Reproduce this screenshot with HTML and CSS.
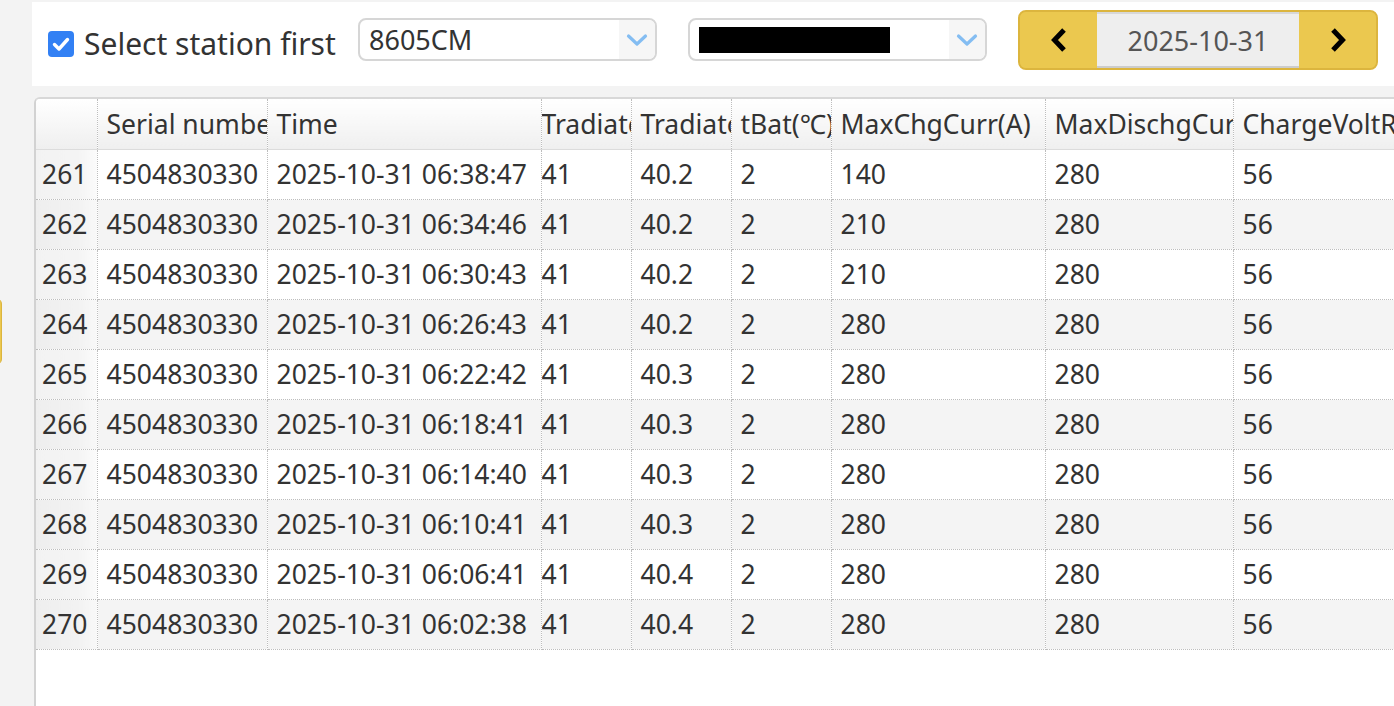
FILE: index.html
```html
<!DOCTYPE html>
<html>
<head>
<meta charset="utf-8">
<link rel="stylesheet" href="styles.css">
</head>
<body>
<div class="page">
  <div class="toolbar">
    <label class="check">
      <span class="box"><svg viewBox="0 0 26 26" width="26" height="26"><path d="M6.5 13.5 L11 18 L19.5 8.5" fill="none" stroke="#fff" stroke-width="3.4" stroke-linecap="round" stroke-linejoin="round"/></svg></span>
      <span class="check-text">Select station first</span>
    </label>
    <div class="select">
      <span class="select-value">8605CM</span>
      <span class="select-arrow"><svg viewBox="0 0 22 14" width="22" height="14"><path d="M2.5 3 L11 11 L19.5 3" fill="none" stroke="#84bdf2" stroke-width="3.2" stroke-linecap="round" stroke-linejoin="round"/></svg></span>
    </div>
    <div class="select select-two">
      <span class="select-value"><span class="redact"></span></span>
      <span class="select-arrow"><svg viewBox="0 0 22 14" width="22" height="14"><path d="M2.5 3 L11 11 L19.5 3" fill="none" stroke="#84bdf2" stroke-width="3.2" stroke-linecap="round" stroke-linejoin="round"/></svg></span>
    </div>
    <div class="datenav">
      <button class="nav-btn nav-prev"><svg viewBox="0 0 22 26" width="22" height="26"><path d="M16 3 L6.5 13 L16 23" fill="none" stroke="#000" stroke-width="5" stroke-linejoin="miter"/></svg></button>
      <span class="nav-date">2025-10-31</span>
      <button class="nav-btn nav-next"><svg viewBox="0 0 22 26" width="22" height="26"><path d="M6 3 L15.5 13 L6 23" fill="none" stroke="#000" stroke-width="5" stroke-linejoin="miter"/></svg></button>
    </div>
  </div>
  <div class="side-tab"></div>
  <div class="grid-wrap">
    <table class="grid">
      <colgroup>
        <col class="c-num"><col class="c-sn"><col class="c-time"><col class="c-t1"><col class="c-t2"><col class="c-tb"><col class="c-chg"><col class="c-dis"><col class="c-cv">
      </colgroup>
      <thead>
        <tr>
          <th class="num"></th><th>Serial number</th><th>Time</th><th class="tight">Tradiator1(℃)</th><th>Tradiator2(℃)</th><th>tBat(℃)</th><th>MaxChgCurr(A)</th><th>MaxDischgCurr(A)</th><th>ChargeVoltRef(V)</th>
        </tr>
      </thead>
      <tbody>
        <tr><td class="num">261</td><td>4504830330</td><td>2025-10-31 06:38:47</td><td class="tight">41</td><td>40.2</td><td>2</td><td>140</td><td>280</td><td>56</td></tr>
        <tr><td class="num">262</td><td>4504830330</td><td>2025-10-31 06:34:46</td><td class="tight">41</td><td>40.2</td><td>2</td><td>210</td><td>280</td><td>56</td></tr>
        <tr><td class="num">263</td><td>4504830330</td><td>2025-10-31 06:30:43</td><td class="tight">41</td><td>40.2</td><td>2</td><td>210</td><td>280</td><td>56</td></tr>
        <tr><td class="num">264</td><td>4504830330</td><td>2025-10-31 06:26:43</td><td class="tight">41</td><td>40.2</td><td>2</td><td>280</td><td>280</td><td>56</td></tr>
        <tr><td class="num">265</td><td>4504830330</td><td>2025-10-31 06:22:42</td><td class="tight">41</td><td>40.3</td><td>2</td><td>280</td><td>280</td><td>56</td></tr>
        <tr><td class="num">266</td><td>4504830330</td><td>2025-10-31 06:18:41</td><td class="tight">41</td><td>40.3</td><td>2</td><td>280</td><td>280</td><td>56</td></tr>
        <tr><td class="num">267</td><td>4504830330</td><td>2025-10-31 06:14:40</td><td class="tight">41</td><td>40.3</td><td>2</td><td>280</td><td>280</td><td>56</td></tr>
        <tr><td class="num">268</td><td>4504830330</td><td>2025-10-31 06:10:41</td><td class="tight">41</td><td>40.3</td><td>2</td><td>280</td><td>280</td><td>56</td></tr>
        <tr><td class="num">269</td><td>4504830330</td><td>2025-10-31 06:06:41</td><td class="tight">41</td><td>40.4</td><td>2</td><td>280</td><td>280</td><td>56</td></tr>
        <tr><td class="num">270</td><td>4504830330</td><td>2025-10-31 06:02:38</td><td class="tight">41</td><td>40.4</td><td>2</td><td>280</td><td>280</td><td>56</td></tr>
      </tbody>
    </table>
  </div>
</div>
</body>
</html>
```

FILE: styles.css
```css
* { box-sizing: border-box; }
html, body { margin: 0; padding: 0; }
body {
  background: #f3f3f3;
  font-family: "Noto Sans", "Noto Sans CJK JP", sans-serif;
  color: #333;
  width: 1394px;
  height: 706px;
  overflow: hidden;
}
.page {
  position: relative;
  display: flex;
  flex-direction: column;
  height: 706px;
  padding-top: 2px;
}
.toolbar {
  margin-left: 32px;
  height: 84px;
  background: #fff;
  display: flex;
  align-items: flex-start;
  padding-left: 16px;
}
.check {
  display: flex;
  align-items: center;
  margin-top: 29px;
  gap: 10px;
  width: 310px;
}
.box {
  width: 26px;
  height: 26px;
  border-radius: 4px;
  background: #3280f4;
  display: block;
  flex: none;
}
.box svg { display: block; }
.check-text {
  font-size: 30px;
  line-height: 26px;
  color: #333;
  white-space: nowrap;
}
.select {
  margin-top: 16px;
  width: 299px;
  height: 43px;
  border: 2px solid #d6d6d6;
  border-radius: 8px;
  display: flex;
  align-items: center;
  overflow: hidden;
  background: #fff;
}
.select-two { margin-left: 31px; }
.select-value {
  flex: 1;
  font-size: 27px;
  padding-left: 9px;
  color: #333;
  display: flex;
  align-items: center;
}
.redact {
  display: block;
  width: 191px;
  height: 26px;
  background: #000;
}
.select-arrow {
  width: 36px;
  height: 100%;
  background: #f6f6f6;
  display: flex;
  align-items: center;
  justify-content: center;
}
.select-arrow svg { display: block; }
.datenav {
  margin-top: 8px;
  margin-left: 31px;
  width: 360px;
  height: 60px;
  display: flex;
  border: 2px solid #dcb53e;
  border-radius: 8px;
  overflow: hidden;
  background: #ebc84f;
}
.nav-btn {
  width: 77px;
  border: 0;
  padding: 0;
  background: #ebc84f;
  display: flex;
  align-items: center;
  justify-content: center;
}
.nav-btn svg { display: block; }
.nav-date {
  flex: 1;
  background: #eeeeee;
  border-top: 2px solid #d8d8d8;
  border-bottom: 2px solid #cccccc;
  display: flex;
  align-items: center;
  justify-content: center;
  font-size: 27px;
  color: #555;
}
.side-tab {
  position: absolute;
  left: -22px;
  top: 298px;
  width: 24px;
  height: 67px;
  background: #ebc84f;
  border: 1px solid #dcb53e;
  border-radius: 6px;
}
.grid-wrap {
  margin-top: 11px;
  margin-left: 34px;
  flex: 1;
  background: #fff;
  border-left: 2px solid #d2d2d2;
  border-top: 2px solid #d8d8d8;
  border-top-left-radius: 6px;
  overflow: hidden;
}
.grid {
  table-layout: fixed;
  border-collapse: collapse;
  width: 1560px;
  font-size: 26.5px;
}
.c-num { width: 61px; }
.c-sn { width: 170px; }
.c-time { width: 274px; }
.c-t1 { width: 90px; }
.c-t2 { width: 100px; }
.c-tb { width: 100px; }
.c-chg { width: 214px; }
.c-dis { width: 188px; }
.c-cv { width: 363px; }
.grid th, .grid td {
  height: 50px;
  padding: 0 0 0 9px;
  white-space: nowrap;
  overflow: hidden;
  text-overflow: clip;
  text-align: left;
  font-weight: normal;
  border-right: 1px dotted #bdbdbd;
  border-bottom: 1px dotted #bdbdbd;
  color: #333;
}
.grid th {
  background: linear-gradient(#ffffff, #efefef);
  border-bottom: 1px solid #dcdcdc;
}
.grid th.num, .grid td.num { padding-left: 6px; }
.grid td.num {
  background: linear-gradient(to right, #f2f2f2 0%, #f4f4f4 70%, #fbfbfb 100%);
}
.grid th.tight, .grid td.tight { padding-left: 0; }
.grid tbody tr:nth-child(even) td { background-color: #f4f4f4; }
.grid tbody tr:nth-child(even) td.num { background: linear-gradient(to right, #eeeeee 0%, #f2f2f2 70%, #f8f8f8 100%); }
```
